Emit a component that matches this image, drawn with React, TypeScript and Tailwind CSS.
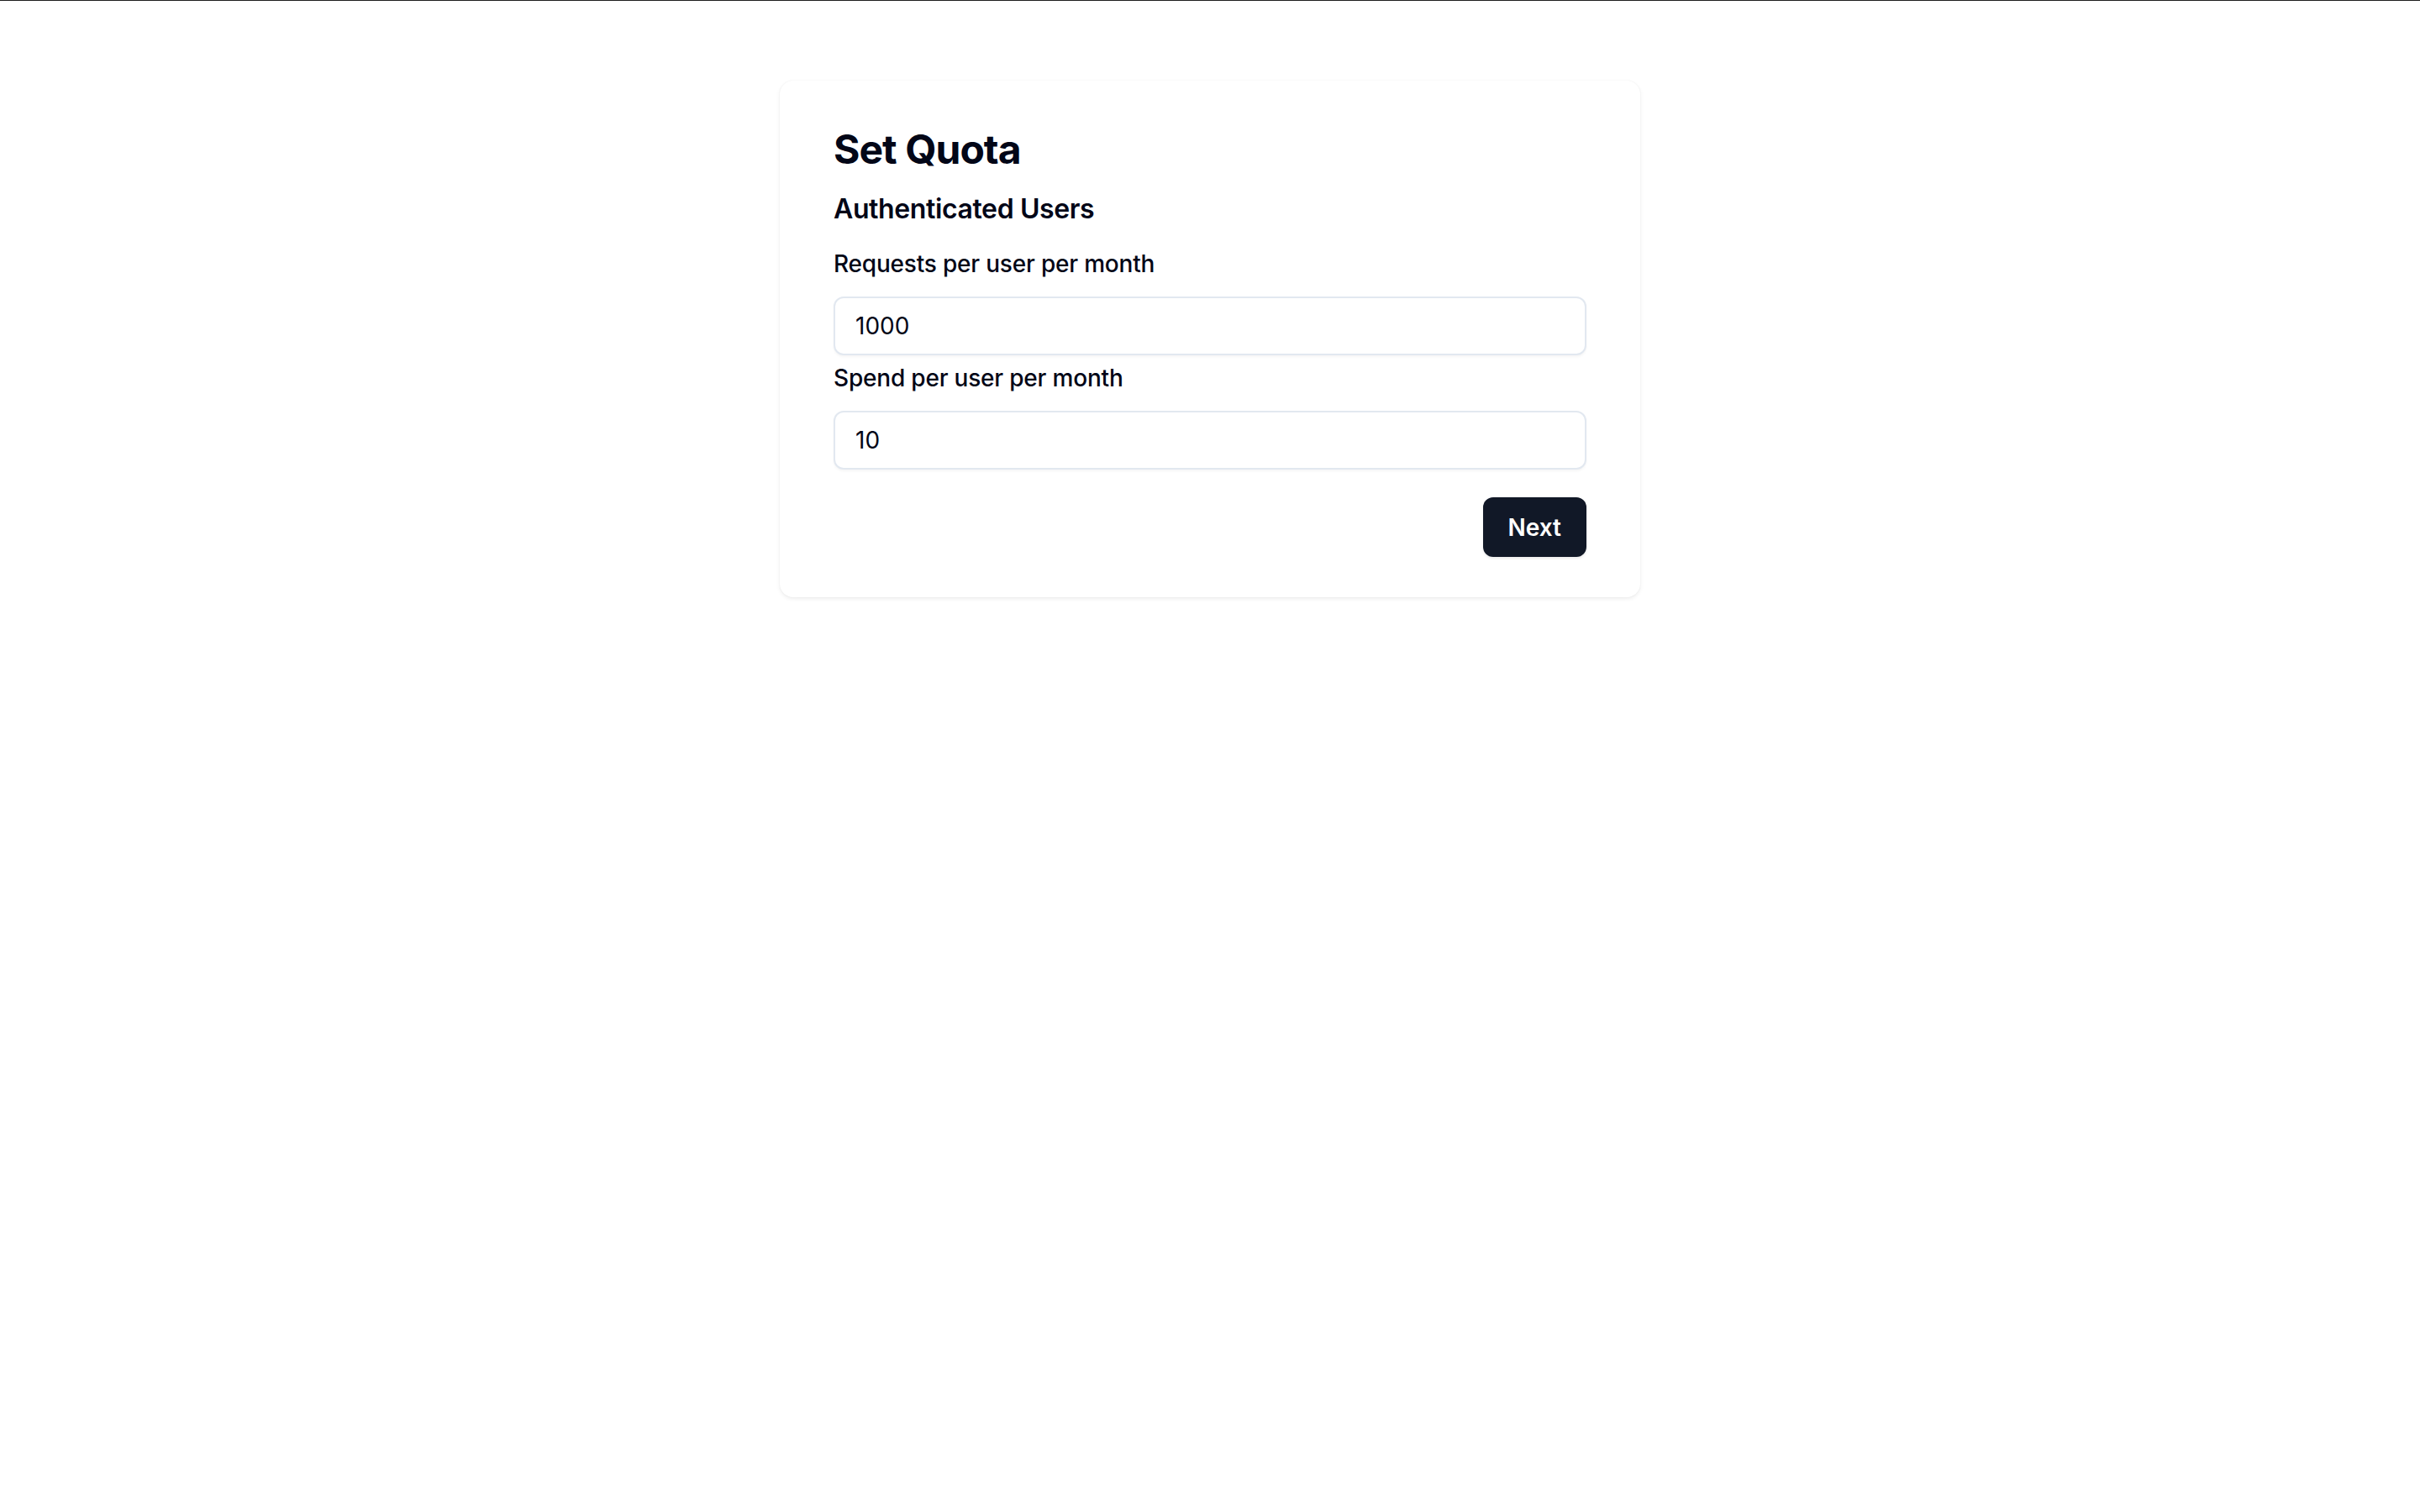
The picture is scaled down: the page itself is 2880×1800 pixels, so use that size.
import React from 'react';

function Field({ label, value, className }: { label: string; value: string; className?: string }) {
  return (
    <div className={className}>
      <label className="block text-[28px] leading-[40px] font-medium tracking-[-0.007em] text-[#020617] mb-[19px]">{label}</label>
      <input
        type="text"
        defaultValue={value}
        className="block w-full h-[70px] rounded-[12px] border-2 border-[#e2e8f0] bg-white px-[24px] text-[28px] text-[#020617] shadow-[0_2px_3px_rgba(0,0,0,0.04)] outline-none"
      />
    </div>
  );
}

function App() {
  return (
    <div className="min-h-screen bg-white font-['Inter','Liberation_Sans',sans-serif]">
      <div className="h-px bg-[#1f1f1f]" />
      <div className="pt-[95px]">
        <div className="mx-auto w-[1024px] rounded-[16px] bg-white px-16 pt-[50px] pb-12 shadow-[0_2px_5px_rgba(0,0,0,0.07),0_0_2px_rgba(0,0,0,0.06)]">
          <h1 className="text-[48px] leading-[64px] font-bold tracking-[-0.02em] text-[#020617]">Set Quota</h1>
          <h2 className="mt-[15px] text-[32px] leading-[48px] font-semibold tracking-[-0.012em] text-[#020617]">Authenticated Users</h2>

          <div className="mt-[21px]">
            <Field label="Requests per user per month" value="1000" />
            <Field label="Spend per user per month" value="10" className="mt-[7px]" />
          </div>

          <div className="mt-[33px] flex justify-end">
            <button className="h-[71px] px-[30px] rounded-[12px] bg-[#111827] text-white text-[28px] font-semibold shadow-[0_2px_3px_rgba(0,0,0,0.08)]">
              Next
            </button>
          </div>
        </div>
      </div>
    </div>
  );
}

export default App;
